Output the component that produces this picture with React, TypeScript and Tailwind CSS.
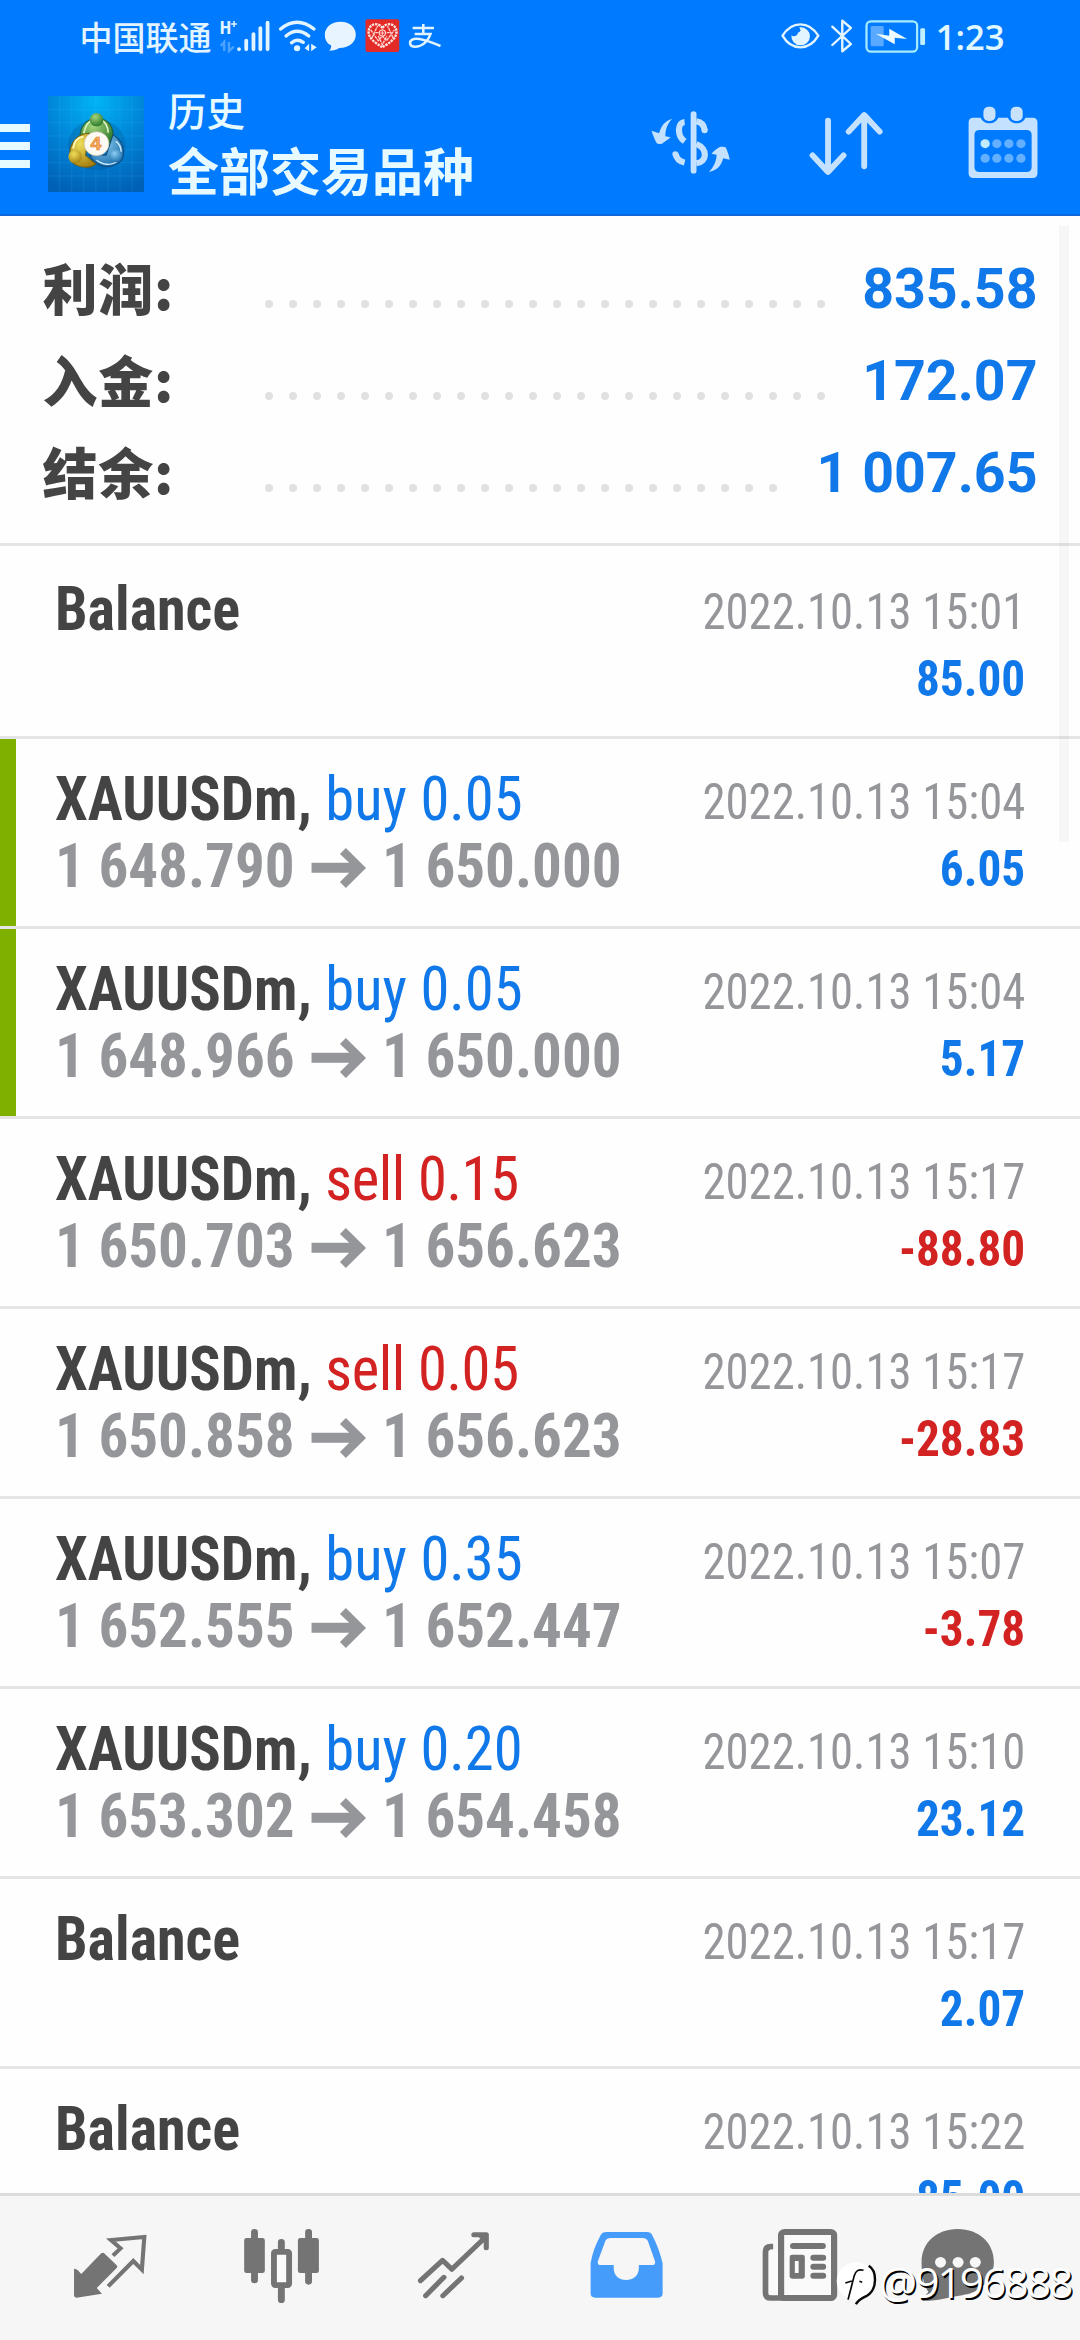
import type { ReactNode } from "react";

type Box = [number, number, number, number];

/* Icons share a drawing grid of 2.9037 units per px across and 3 units per px down. */
function Glyph({ box, children, className }: { box: Box; children: ReactNode; className?: string }) {
  const [x, y, w, h] = box;
  return (
    <svg
      width={w / 2.9037}
      height={h / 3}
      viewBox={`${x} ${y} ${w} ${h}`}
      preserveAspectRatio="none"
      className={`block shrink-0 ${className ?? ""}`}
      fill="none"
    >
      {children}
    </svg>
  );
}

const ICE = "#e2f4ff";
const PALE = "#c4e2ff";
const GRAY = "#747474";

function StatusBar() {
  return (
    <div className="flex h-[72px] items-center pl-[79.5px] pr-[75.5px]">
      <span className="font-['Noto_Sans_CJK_SC',sans-serif] text-[33px] font-medium leading-[72px] text-[#e2f4ff]">中国联通</span>
      <Glyph box={[632, 0, 163, 216]} className="ml-[6px]">
        <text x="637" y="103" fill={ICE} fontFamily="Roboto Condensed" fontWeight="700" fontSize="54">H</text>
        <path d="M670 72H687M678.500 63V81" stroke={ICE} strokeWidth="4.500" />
        <path d="M650 153V126L640 138M664 126V153L678 140" stroke="#4ba3ff" strokeWidth="7" />
        <path d="M693 147V148M714 122V148M735 102V148M755 84V148M776 68V148" stroke={ICE} strokeWidth="11" strokeLinecap="round" />
      </Glyph>
      <Glyph box={[795, 0, 135, 216]}>
        <path d="M814 87Q862 46 911 87M830 108Q862 80 896 108M846 128Q862 114 880 127" stroke={ICE} strokeWidth="10" strokeLinecap="round" />
        <circle cx="862" cy="145" r="9" fill={ICE} />
        <path d="M897 131V154L884 145ZM903 154V131L919 142Z" fill={ICE} />
      </Glyph>
      <Glyph box={[930, 0, 115, 216]}>
        <path d="M990 65C1017 65 1034 82 1034 104C1034 127 1014 143 986 144C978 150 968 152 957 152C962 147 963 142 962 136C949 129 944 117 944 104C944 82 962 65 990 65Z" fill="#e8f4ff" />
      </Glyph>
      <Glyph box={[1045, 0, 130, 216]}>
        <rect x="1061" y="58" width="98" height="98" rx="6" fill="#e22b27" />
        <path d="M1110 85C1102 66 1070 68 1070 96C1070 118 1096 132 1110 142C1124 132 1151 118 1151 96C1151 68 1118 66 1110 85Z" stroke="#ffe3df" strokeWidth="7" strokeDasharray="7 2.500" />
        <path d="M1076 90L1098 122L1110 108L1122 122L1145 90M1080 113L1096 78M1141 113L1125 78M1090 98H1131M1098 108L1110 134L1123 108M1110 88V112" stroke="#ffd2cd" strokeWidth="4" strokeDasharray="9 2" />
        <circle cx="1110" cy="99" r="9" fill="#e22b27" stroke="#ffe3df" strokeWidth="3" />
        <path d="M1104 99H1116M1110 93V105" stroke="#ffe3df" strokeWidth="2.500" />
      </Glyph>
      <Glyph box={[1175, 0, 125, 216]}>
        <path d="M1200 84H1262M1231 72V101M1206 102H1252C1246 122 1229 140 1207 140C1190 140 1187 122 1204 117C1226 112 1254 128 1281 138" stroke={ICE} strokeWidth="7.500" />
      </Glyph>

      <Glyph box={[690, 0, 130, 216]} className="ml-auto">
        <path d="M703 107C716 86 734 73 755 73S794 86 807 107C794 130 776 142 755 142S716 130 703 107Z" stroke={ICE} strokeWidth="7" strokeLinejoin="round" />
        <path d="M754 82A27 27 0 1 1 729 106C733 112 747 108 748 98C757 96 757 89 751 82Z" fill={ICE} />
      </Glyph>
      <Glyph box={[820, 0, 110, 216]}>
        <path d="M847 80L901 132L876 154V62L901 84L847 135" stroke={ICE} strokeWidth="7" strokeLinecap="round" strokeLinejoin="round" />
      </Glyph>
      <Glyph box={[930, 0, 200, 216]}>
        <rect x="946" y="64" width="147" height="91" rx="13" stroke="#a5ecff" strokeWidth="6.500" />
        <rect x="958" y="78" width="38" height="61" rx="4" fill="#58a9ff" />
        <path d="M973 101L1012 107V86L1064 117L1028 113V133Z" fill="#eefbff" />
        <rect x="1102" y="85" width="14" height="50" rx="4" fill="#c0efff" />
      </Glyph>
      <span className="ml-[6px] pt-[2px] font-['Open_Sans',sans-serif] text-[34.6px] font-semibold leading-[74px] text-[#e2f8ff]">1:23</span>
    </div>
  );
}

function Logo() {
  return (
    <Glyph box={[139, 288, 279, 288]}>
      <defs>
        <radialGradient id="lgBg" cx="0.5" cy="0.05" r="1">
          <stop offset="0" stopColor="#00b4f5" />
          <stop offset="0.5" stopColor="#0085d8" />
          <stop offset="1" stopColor="#0060b4" />
        </radialGradient>
        <radialGradient id="lgG" cx="0.4" cy="0.3" r="0.7">
          <stop offset="0" stopColor="#a5d47c" />
          <stop offset="1" stopColor="#2c7a2c" />
        </radialGradient>
        <radialGradient id="lgY" cx="0.4" cy="0.3" r="0.7">
          <stop offset="0" stopColor="#eedf5c" />
          <stop offset="1" stopColor="#a98412" />
        </radialGradient>
        <radialGradient id="lgB" cx="0.4" cy="0.3" r="0.7">
          <stop offset="0" stopColor="#8ccdf0" />
          <stop offset="1" stopColor="#1d70ae" />
        </radialGradient>
      </defs>
      <rect x="139" y="288" width="279" height="288" fill="url(#lgBg)" />
      <path d="M173 288V576M208 288V576M243 288V576M278 288V576M313 288V576M348 288V576M383 288V576M139 328H418M139 368H418M139 408H418M139 448H418M139 488H418M139 528H418" stroke="#4cc4f5" strokeOpacity="0.28" strokeWidth="1.500" />
      <ellipse cx="281" cy="435" rx="84" ry="76" fill="#003e78" opacity="0.22" />
      <path d="M232 410C232 340 326 334 328 404L318 438L300 402L254 402Z" fill="url(#lgG)" stroke="#1f5c3a" strokeWidth="3" />
      <path d="M243 400C250 368 262 362 272 358M314 398C312 374 302 364 294 360" stroke="#dff3c0" strokeWidth="5" />
      <path d="M258 400C200 402 186 480 222 496C245 506 264 502 278 492L248 466Z" fill="url(#lgY)" stroke="#716015" strokeWidth="3" />
      <path d="M212 446C214 424 226 412 242 410" stroke="#fffbc0" strokeWidth="5" />
      <path d="M328 404C366 430 368 478 336 494C306 508 272 494 260 464L308 466Z" fill="url(#lgB)" stroke="#11497d" strokeWidth="3" />
      <path d="M280 480C298 496 322 496 338 486M336 424C346 432 352 444 351 456" stroke="#d5f1ff" strokeWidth="4" />
      <circle cx="280" cy="359" r="20" fill="url(#lgG)" />
      <circle cx="218" cy="470" r="20" fill="url(#lgY)" />
      <circle cx="336" cy="468" r="19" fill="url(#lgB)" />
      <circle cx="280" cy="431" r="36" fill="#fdfaf3" stroke="#c9c3ae" strokeWidth="2" />
      <text x="278" y="451" textAnchor="middle" fontFamily="Liberation Sans" fontWeight="700" fontSize="56" fill="#f7ad62" stroke="#dd7d28" strokeWidth="2">4</text>
    </Glyph>
  );
}

function AppBar() {
  return (
    <div className="flex h-[144px] items-start border-b-[2px] border-[#0c68d8]">
      <Glyph box={[0, 216, 139, 420]}>
        <path d="M0 384H87M0 438H87M0 492H87" stroke="#e6fbff" strokeWidth="24" />
      </Glyph>
      <div className="mt-[24px]">
        <Logo />
      </div>
      <div className="ml-[24px] mt-[8px] font-['Noto_Sans_CJK_SC',sans-serif] text-[#e6faff]">
        <div className="text-[38.5px] font-medium leading-[58px]">历史</div>
        <div className="text-[51px] font-bold leading-[63px]">全部交易品种</div>
      </div>
      <div className="ml-auto flex gap-[73px] pr-[34px]">
        <Glyph box={[300, 216, 260, 420]}>
          <path d="M444 342V512" stroke={PALE} strokeWidth="17" strokeLinecap="round" />
          <path d="M418 366C396 368 396 408 418 424M392 462C394 474 402 484 418 488" stroke={PALE} strokeWidth="18" />
          <circle cx="391" cy="462" r="8.500" fill={PALE} />
          <path d="M452 364C464 366 474 374 476 390M452 432C486 446 484 486 452 490" stroke={PALE} strokeWidth="18" />
          <circle cx="476" cy="391" r="9" fill={PALE} />
          <path d="M382 356C366 372 362 392 362 409L377 412C368 420 360 426 352 431C346 433 340 432 337 430C331 418 326 406 322 392L344 400C350 376 362 362 382 356Z" fill={PALE} />
          <path d="M488 516C504 500 510 482 511 464L496 461C504 452 512 445 520 441C528 439 534 441 538 443C543 455 547 467 549 479L530 475C524 498 512 512 488 516Z" fill={PALE} />
        </Glyph>
        <Glyph box={[772, 216, 234, 420]}>
          <path d="M836 362V514M791 466L836 516L881 466M941 499V346M896 395L941 345L986 395" stroke={PALE} strokeWidth="17" strokeLinecap="round" strokeLinejoin="round" />
        </Glyph>
        <Glyph box={[1218, 216, 250, 420]}>
          <path fillRule="evenodd" d="M1257 353H1278C1282 363 1292 370 1304 370S1325 363 1329 353H1357C1361 363 1371 370 1383 370S1404 363 1408 353H1429Q1443 353 1443 367V520Q1443 534 1429 534H1257Q1243 534 1243 520V367Q1243 353 1257 353ZM1275 390Q1260 390 1260 405V501Q1260 516 1275 516H1411Q1426 516 1426 501V405Q1426 390 1411 390Z" fill={PALE} />
          <rect x="1286" y="320" width="35" height="43" rx="15" fill="#c9e2fb" />
          <rect x="1365" y="320" width="35" height="43" rx="15" fill="#c9e2fb" />
          <circle cx="1291" cy="431" r="13.500" fill="#c0ecff" />
          {[1325, 1360, 1395].map((x) => <circle key={x} cx={x} cy="431" r="13.500" fill="#62b0ff" />)}
          {[1291, 1325, 1360, 1395].map((x) => <circle key={x} cx={x} cy="475" r="13.500" fill="#62b0ff" />)}
        </Glyph>
      </div>
    </div>
  );
}

const summary = [
  { label: "利润:", value: "835.58", dots: 24 },
  { label: "入金:", value: "172.07", dots: 24 },
  { label: "结余:", value: "1 007.65", dots: 22 },
];

function Summary() {
  return (
    <div className="mb-[3px] border-b-[3px] border-[#e5e5e5] pb-6 pl-[42.5px] pr-[42.5px] pt-[27px]">
      {summary.map((s) => (
        <div key={s.label} className="flex h-[92px]">
          <span className="w-[222.800px] font-['Noto_Sans_CJK_SC',sans-serif] text-[55px] font-black leading-[86px] tracking-[0.700px] text-[#444444]">{s.label}</span>
          <span className="flex gap-4 pt-[57.300px]">
            {Array.from({ length: s.dots }, (_, i) => (
              <i key={i} className="size-2 rounded-full bg-[#e1e1e1]" />
            ))}
          </span>
          <span className="ml-auto whitespace-nowrap font-['Roboto',sans-serif] text-[55.500px] font-bold leading-[93px] text-[#1078e8]">{s.value}</span>
        </div>
      ))}
    </div>
  );
}

type Deal = {
  side?: "buy" | "sell";
  lot?: string;
  from?: string;
  to?: string;
  time: string;
  profit: string;
  closed?: boolean;
};

const deals: Deal[] = [
  { time: "15:01", profit: "85.00" },
  { side: "buy", lot: "0.05", from: "1 648.790", to: "1 650.000", time: "15:04", profit: "6.05", closed: true },
  { side: "buy", lot: "0.05", from: "1 648.966", to: "1 650.000", time: "15:04", profit: "5.17", closed: true },
  { side: "sell", lot: "0.15", from: "1 650.703", to: "1 656.623", time: "15:17", profit: "-88.80" },
  { side: "sell", lot: "0.05", from: "1 650.858", to: "1 656.623", time: "15:17", profit: "-28.83" },
  { side: "buy", lot: "0.35", from: "1 652.555", to: "1 652.447", time: "15:07", profit: "-3.78" },
  { side: "buy", lot: "0.20", from: "1 653.302", to: "1 654.458", time: "15:10", profit: "23.12" },
  { time: "15:17", profit: "2.07" },
  { time: "15:22", profit: "85.00" },
];

function DealRow({ d }: { d: Deal }) {
  return (
    <div className="flex h-[190px] shrink-0 whitespace-nowrap border-b-[3px] border-[#e5e5e5] font-['Roboto_Condensed',sans-serif]">
      <div className={d.closed ? "w-[15.500px] bg-[#7fb000]" : "w-[15.500px]"} />
      <div className="ml-[39.500px] w-[590px] pt-[26.500px] text-[61.500px] font-bold leading-[67px] text-[#444444]">
        {d.side ? (
          <>
            <div className="origin-left scale-x-[0.953]">
              XAUUSDm,{" "}
              <span className={d.side === "buy" ? "font-normal text-[#1078e8]" : "font-normal tracking-[-0.400px] text-[#d32222]"}>
                {d.side} {d.lot}
              </span>
            </div>
            <div className="flex origin-left scale-x-[0.96] items-center text-[#95969a]">
              <span>{d.from}</span>
              <svg width="57" height="40" viewBox="0 0 57 40" className="mx-[17px] mt-[3px] shrink-0">
                <path d="M0 14.700H39.500L29.800 6L36 0L57 20L36 40L29.800 34L39.500 24.800H0Z" fill="#95969a" />
              </svg>
              <span>{d.to}</span>
            </div>
          </>
        ) : (
          <div className="origin-left scale-x-[0.945]">Balance</div>
        )}
      </div>
      <div className="ml-auto mr-[55px] pt-[30px] text-right text-[49.500px] leading-[67px]">
        <div className="origin-right scale-x-[0.943] text-[#95969a]">2022.10.13 {d.time}</div>
        <div className={d.profit.startsWith("-") ? "origin-right scale-x-[0.955] font-bold text-[#d32222]" : "origin-right scale-x-[0.955] font-bold text-[#1078e8]"}>
          {d.profit}
        </div>
      </div>
    </div>
  );
}

function BottomNav() {
  const cell = (i: number): Box => [i * 522.67, 108, 522.67, 432];
  return (
    <div className="grid h-[147px] grid-cols-6 border-t-[3px] border-[#dcdcdc] bg-[#f6f6f6]">
      <Glyph box={cell(0)}>
        <path d="M294 280Q299 276 304 281L338 315Q343 320 338 325L281 384L296 401L222 413Q215 413 215 406V326Q222 326 226 331L236 342Z" fill={GRAY} />
        <path d="M328 287L350 265L322 240L419 231L412 329L387 303L314 379" stroke={GRAY} strokeWidth="12" />
      </Glyph>
      <Glyph box={cell(1)}>
        <path d="M739 217V360M896 217V364M817 247V275M817 375V419" stroke={GRAY} strokeWidth="20" strokeLinecap="round" />
        <rect x="709" y="234" width="60" height="105" rx="7" fill={GRAY} />
        <rect x="865" y="234" width="61" height="105" rx="7" fill={GRAY} />
        <rect x="795.500" y="275.500" width="44" height="100" rx="4" fill="#fbfbfb" stroke={GRAY} strokeWidth="17" />
      </Glyph>
      <Glyph box={cell(2)}>
        <path d="M1221 362L1285 301L1312 328L1408 233M1376 224H1412V263M1236 407L1289 352M1286 407L1340 354" stroke={GRAY} strokeWidth="15" strokeLinecap="round" strokeLinejoin="round" />
        <path d="M1390 232L1412 224V252Z" fill={GRAY} />
      </Glyph>
      <Glyph box={cell(0)}>
        <path fillRule="evenodd" d="M192 216H311Q321 216 326 226C340 254 350 282 356 310V400Q356 413 343 413H160Q147 413 147 400V310C151 282 162 252 176 226Q181 216 192 216ZM203 234Q194 234 190 242L168 304Q166 315 176 315H214V324C214 348 230 360 250 360S287 348 287 324V315H326Q336 315 334 304L313 242Q309 234 300 234Z" fill="#459cfa" />
      </Glyph>
      <Glyph box={cell(1)}>
        <rect x="700" y="216" width="154" height="198" rx="10" fill="#fafafa" stroke={GRAY} strokeWidth="18" />
        <path d="M677 260H670Q655 260 655 276V398Q655 414 671 414H720" stroke={GRAY} strokeWidth="17" />
        <path d="M664 275Q664 269 670 269H691V404H664Z" fill="#fafafa" />
        <path d="M735 258H821M794 293H822M794 320H822M794 347H822" stroke={GRAY} strokeWidth="18" strokeLinecap="round" />
        <rect x="725" y="284" width="44" height="72" rx="7" fill={GRAY} />
        <rect x="740" y="303" width="11" height="36" fill="#fafafa" />
      </Glyph>
      <Glyph box={cell(2)}>
        <path d="M1213 207C1276 207 1318 250 1318 306C1318 352 1284 396 1230 405C1196 410 1160 422 1112 423Q1107 420 1112 414L1128 396C1114 376 1108 346 1108 306C1108 250 1150 207 1213 207Z" fill={GRAY} />
        <circle cx="1163" cy="307" r="16" fill="#f7f7f7" />
        <circle cx="1214" cy="307" r="16" fill="#f7f7f7" />
        <circle cx="1264" cy="307" r="16" fill="#f7f7f7" />
      </Glyph>
    </div>
  );
}

function AccountTag() {
  return (
    <div className="absolute bottom-[30px] left-[836px] flex items-center">
      <Glyph box={[860, 290, 125, 150]} className="overflow-visible">
        <circle cx="918" cy="362" r="56" fill="#ffffff" />
        <path d="M940 330C926 325 917 332 913 346L895 418M887 368L906 362M928 363L936 366" stroke="#0a0a0a" strokeWidth="5" />
        <path d="M955 316C980 332 980 388 950 406C936 414 926 416 918 432" stroke="#0a0a0a" strokeWidth="7" />
      </Glyph>
      <span className="font-['Open_Sans',sans-serif] text-[42.500px] font-normal leading-[56px] tracking-[-2px] text-white [text-shadow:1.500px_1.500px_0.500px_#000]">@9196888</span>
    </div>
  );
}

export default function App() {
  return (
    <div className="relative flex h-[2340px] w-[1080px] flex-col overflow-hidden bg-[#fefefe]">
      <header className="shrink-0 bg-[#007aff]">
        <StatusBar />
        <AppBar />
      </header>
      <main className="flex min-h-0 flex-1 flex-col overflow-hidden">
        <Summary />
        {deals.map((d, i) => (
          <DealRow key={i} d={d} />
        ))}
      </main>
      <BottomNav />
      <div className="absolute right-[11px] top-[226px] h-[616px] w-[10px] bg-black/[0.03]" />
      <AccountTag />
    </div>
  );
}
